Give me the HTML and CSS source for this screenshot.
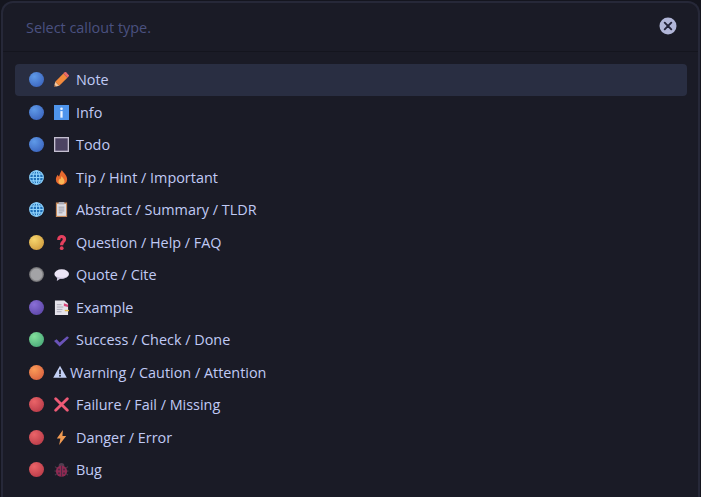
FILE: index.html
```html
<!DOCTYPE html>
<html lang="en">
<head>
<meta charset="utf-8">
<title>Select callout type</title>
<link rel="stylesheet" href="styles.css">
</head>
<body>
<svg class="defs" width="0" height="0" aria-hidden="true">
  <symbol id="globe" viewBox="0 0 16 16">
    <circle cx="8" cy="8" r="7.500" fill="#1f6fb8"/>
    <g fill="none" stroke="#8fd2fb" stroke-width="1.100">
      <circle cx="8" cy="8" r="7.300"/>
      <ellipse cx="8" cy="8" rx="3.600" ry="7.300"/>
      <path d="M8 1v14M1 8h14M2 4.400h12M2 11.600h12"/>
    </g>
  </symbol>
</svg>
<main class="modal">
  <header class="head">
    <span class="prompt">Select callout type.</span>
    <svg class="close" viewBox="0 0 18 18" aria-label="Close">
      <circle cx="9" cy="9" r="8.500" fill="#b1b6d8"/>
      <path d="M5.700 5.700l6.600 6.600M12.300 5.700l-6.600 6.600" stroke="#23243a" stroke-width="1.900" stroke-linecap="round"/>
    </svg>
  </header>
  <ul class="list">
    <li class="row active"><span class="dot blue"></span>
      <svg class="ico" viewBox="0 0 16 16"><path d="M0 16l1.300-5.600 4.300 4.300z" fill="#f5c9a0"/><path d="M0 16l.5-2.400 1.900 1.900z" fill="#7a4a30"/><path d="M1.300 10.400L10 1.700l4.300 4.300-8.700 8.700z" fill="#f28a3c"/><path d="M10 1.700L11.400.3a1 1 0 0 1 1.400 0l2.900 2.900a1 1 0 0 1 0 1.400L14.300 6z" fill="#ea6a6a"/></svg>
      <span class="label">Note</span></li>
    <li class="row"><span class="dot blue"></span>
      <svg class="ico" viewBox="0 0 16 16"><rect width="16" height="16" fill="#4f95ec"/><circle cx="8" cy="4" r="1.400" fill="#eaf3ff"/><rect x="6.800" y="6.500" width="2.400" height="7" fill="#eaf3ff"/></svg>
      <span class="label">Info</span></li>
    <li class="row"><span class="dot blue"></span>
      <svg class="ico" viewBox="0 0 16 16"><rect x=".7" y=".7" width="14.600" height="14.600" fill="#4c4362" stroke="#c4bfd0" stroke-width="1.400"/></svg>
      <span class="label">Todo</span></li>
    <li class="row"><svg class="globe"><use href="#globe"/></svg>
      <svg class="ico" viewBox="0 0 16 16"><path d="M8.500 0c.6 2.600 5.500 5 5.500 10a6 6 0 0 1-12 0c0-2.400 1.200-3.500 1.900-5 .5 1 .8 1.500 1.500 2C6.300 4.500 7 2 8.500 0z" fill="#e8692e"/><path d="M8.200 6.500c.3 1.500 3 3 3 5.600a3.200 3.200 0 0 1-6.400 0c0-1.300 1.100-2.200 1.600-3 .2.400.4.600.7.800.1-1 .4-2.200 1.100-3.400z" fill="#f9b655"/></svg>
      <span class="label">Tip / Hint / Important</span></li>
    <li class="row"><svg class="globe"><use href="#globe"/></svg>
      <svg class="ico" viewBox="0 0 16 16"><rect x="2" y=".5" width="12" height="15.500" fill="#c5895a"/><rect x="3.200" y="2" width="9.600" height="12.800" fill="#dcdce2"/><rect x="5" y="0" width="6" height="2.500" fill="#a9a9b3"/><path d="M5 5.500h6M5 7.500h6M5 9.500h6M5 11.500h4" stroke="#9a9aa6" stroke-width="1"/></svg>
      <span class="label">Abstract / Summary / TLDR</span></li>
    <li class="row"><span class="dot yellow"></span>
      <svg class="ico" viewBox="0 0 16 16"><path d="M3.300 5.200C3.300 2 5.500 0 8.300 0c2.700 0 4.600 1.800 4.600 4.200 0 3.500-3 3.800-3 6.800H6.500c-.3-4 2.800-4.600 2.800-6.500 0-.8-.5-1.400-1.200-1.400-.9 0-1.400.8-1.400 2.100z" fill="#e5405e"/><circle cx="8.200" cy="14" r="2" fill="#e5405e"/></svg>
      <span class="label">Question / Help / FAQ</span></li>
    <li class="row"><span class="dot gray"></span>
      <svg class="ico" viewBox="0 0 16 16"><ellipse cx="8.200" cy="7.500" rx="7.800" ry="5" fill="#ece6f6"/><path d="M3.500 10L3 15l4.500-3z" fill="#cfc8de"/><path d="M1.500 9.500c2 2.400 9 3 13 .3-2 2.400-5 2.700-6.500 2.700-3 0-5.500-1-6.500-3z" fill="#c3bcd4"/></svg>
      <span class="label">Quote / Cite</span></li>
    <li class="row"><span class="dot purple"></span>
      <svg class="ico" viewBox="0 0 16 16"><path d="M1 .5h10l4 3.500v12H1z" fill="#e4e2ea"/><path d="M3 5h5M3 7.500h7M3 10h6M3 12.500h5" stroke="#a9a7b6" stroke-width="1"/><path d="M10.500 3.500L15 5v2.500l-4.500-1z" fill="#d8457a"/><path d="M11.500 10.500h4.500v1.500h-4.500z" fill="#e3b94a"/></svg>
      <span class="label">Example</span></li>
    <li class="row"><span class="dot green"></span>
      <svg class="ico" viewBox="0 0 16 16"><path d="M0 9.500L2.800 7.800l3.200 3.400L14 4.500 16 6 6 15.500z" fill="#6a53b8"/></svg>
      <span class="label">Success / Check / Done</span></li>
    <li class="row"><span class="dot orange"></span>
      <svg class="ico warn" viewBox="0 0 14 14"><path d="M7 .8l6.800 12H.2z" fill="#c3d0f5"/><rect x="6.200" y="4.600" width="1.600" height="4.600" fill="#1a1b26"/><rect x="6.200" y="10" width="1.600" height="1.600" fill="#1a1b26"/></svg>
      <span class="label">Warning / Caution / Attention</span></li>
    <li class="row"><span class="dot red"></span>
      <svg class="ico" viewBox="0 0 16 16"><path d="M1.800 1.800l12.400 12.400M14.200 1.800L1.800 14.200" stroke="#ee5a76" stroke-width="3" stroke-linecap="round"/></svg>
      <span class="label">Failure / Fail / Missing</span></li>
    <li class="row"><span class="dot red"></span>
      <svg class="ico" viewBox="0 0 16 16"><path d="M9.500 0L3 9h3.800L5.500 16l7.500-9.500H9z" fill="#f09a52"/></svg>
      <span class="label">Danger / Error</span></li>
    <li class="row"><span class="dot red"></span>
      <svg class="ico" viewBox="0 0 16 16"><g stroke="#4a3d4e" stroke-width="1.100" fill="none"><path d="M1 5l3 2M15 5l-3 2M.5 9.500h3M15.500 9.500h-3M1 14l3-2M15 14l-3-2"/></g><circle cx="8" cy="4" r="3" fill="#4f3f50"/><ellipse cx="8" cy="9.800" rx="6" ry="6" fill="#8f2a52"/><path d="M8 4v12" stroke="#4c2a44" stroke-width="1"/><circle cx="5.300" cy="8" r="1.100" fill="#4c2a44"/><circle cx="10.700" cy="8" r="1.100" fill="#4c2a44"/><circle cx="5.300" cy="12" r="1.100" fill="#4c2a44"/><circle cx="10.700" cy="12" r="1.100" fill="#4c2a44"/></svg>
      <span class="label">Bug</span></li>
  </ul>
</main>
</body>
</html>
```
FILE: styles.css
```css
* { box-sizing: border-box; }
html, body { margin: 0; height: 100%; }
body {
  background: #14151e;
  font-family: "Open Sans", "Noto Sans", sans-serif;
  overflow: hidden;
  width: 701px;
  height: 497px;
  padding: 1px 1px 0;
}
.defs { display: block; height: 0; }
.modal {
  width: 699px;
  height: 496px;
  background: #1a1b26;
  border: 2px solid #262838;
  border-bottom: 0;
  border-radius: 12px 12px 0 0;
}
.head {
  height: 49px;
  display: flex;
  align-items: center;
  justify-content: space-between;
  padding: 0 21px 0 23px;
  border-bottom: 1px solid #14151e;
}
.prompt { font-size: 14.4px; color: #4a5180; margin-top: 1px; }
.close { width: 18px; height: 18px; display: block; margin-top: -2px; }
.list {
  list-style: none;
  margin: 11.75px 0 0;
  padding: 0 11px 0 12px;
}
.row {
  height: 32.5px;
  display: flex;
  align-items: center;
  padding: 0 0 1px 14px;
  color: #c0caf5;
  font-size: 14.4px;
  border-radius: 4px;
}
.row.active { background: #292e42; }
.dot {
  width: 15px;
  height: 15px;
  border-radius: 50%;
  flex: none;
  margin-right: 10px;
}
.blue { background: radial-gradient(circle at 35% 30%, #5f9ae8, #3a63bd 85%); }
.yellow { background: radial-gradient(circle at 35% 30%, #f6d56d, #cf9a3d 85%); }
.gray { background: radial-gradient(circle, #a3a3a6 50%, #5f5f62 72%, #8a8a8c 100%); }
.purple { background: radial-gradient(circle at 35% 30%, #8a6fd6, #5b45a6 85%); }
.green { background: radial-gradient(circle at 35% 30%, #83e09c, #48a878 85%); }
.orange { background: radial-gradient(circle at 35% 30%, #fb9b57, #d9603f 85%); }
.red { background: radial-gradient(circle at 35% 30%, #ea6468, #b83a48 85%); }
.globe { width: 15px; height: 15px; flex: none; margin-right: 10px; display: block; }
.ico { width: 15px; height: 15px; flex: none; margin-right: 7px; display: block; }
.ico.warn { width: 14px; height: 14px; margin: 0 3px 0 -1px; }
```
